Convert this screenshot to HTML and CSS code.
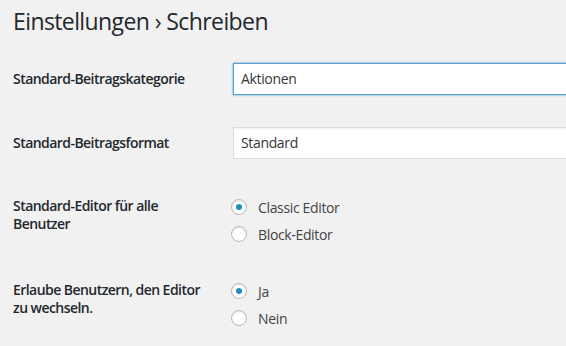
FILE: index.html
```html
<!DOCTYPE html>
<html lang="de">
<head>
    <meta charset="UTF-8">
    <title>Einstellungen › Schreiben</title>
    <link rel="stylesheet" href="styles.css">
</head>
<body>
    <div class="wrap">
        <h1>Einstellungen › Schreiben</h1>
        <form class="form-table">
            <div class="row">
                <label class="row-label" for="cat">Standard-Beitragskategorie</label>
                <div class="field">
                    <div class="select focused" id="cat">Aktionen</div>
                </div>
            </div>
            <div class="row">
                <label class="row-label" for="format">Standard-Beitragsformat</label>
                <div class="field">
                    <div class="select" id="format">Standard</div>
                </div>
            </div>
            <div class="row row-top">
                <div class="row-label">Standard-Editor für alle Benutzer</div>
                <div class="options">
                    <label class="option"><span class="radio checked"></span>Classic Editor</label>
                    <label class="option"><span class="radio"></span>Block-Editor</label>
                </div>
            </div>
            <div class="row row-top">
                <div class="row-label">Erlaube Benutzern, den Editor zu wechseln.</div>
                <div class="options">
                    <label class="option"><span class="radio checked"></span>Ja</label>
                    <label class="option"><span class="radio"></span>Nein</label>
                </div>
            </div>
        </form>
    </div>
</body>
</html>
```

FILE: styles.css
```css
* {
    box-sizing: border-box;
    margin: 0;
    padding: 0;
}

html, body {
    background-color: #f1f1f1;
    color: #23282d;
    font-family: 'Open Sans', 'Noto Sans', sans-serif;
    font-size: 14px;
    letter-spacing: -0.35px;
    overflow: hidden;
}

.wrap {
    padding-left: 13px;
}

h1 {
    font-size: 23px;
    font-weight: 400;
    line-height: 29px;
    letter-spacing: -0.6px;
    margin: 7px 0 11px;
}

.row {
    display: grid;
    grid-template-columns: 220px 420px;
    align-items: center;
    padding: 16px 0;
}

.row-top {
    align-items: start;
    padding: 22px 0 16px;
}

.row-label {
    font-weight: 600;
    line-height: 18px;
    letter-spacing: -0.55px;
    padding-right: 18px;
}

.select {
    height: 32px;
    line-height: 30px;
    padding: 0 7px;
    background: #fff;
    border: 1px solid #ddd;
    box-shadow: inset 0 1px 2px rgba(0, 0, 0, 0.07);
    color: #32373c;
}

.select.focused {
    border-color: #5b9dd9;
    box-shadow: 0 0 2px rgba(30, 140, 190, 0.8);
}

.options {
    display: flex;
    flex-direction: column;
    gap: 9px;
    padding-top: 1px;
}

.option {
    display: flex;
    align-items: center;
    gap: 11px;
    height: 18px;
    color: #444;
}

.radio {
    width: 16px;
    height: 16px;
    margin-left: -2px;
    border: 1px solid #b4b9be;
    border-radius: 50%;
    background: #fff;
    box-shadow: inset 0 1px 2px rgba(0, 0, 0, 0.1);
    display: flex;
    align-items: center;
    justify-content: center;
}

.radio.checked::after {
    content: "";
    width: 6px;
    height: 6px;
    border-radius: 50%;
    background: #1e8cbe;
}
```
